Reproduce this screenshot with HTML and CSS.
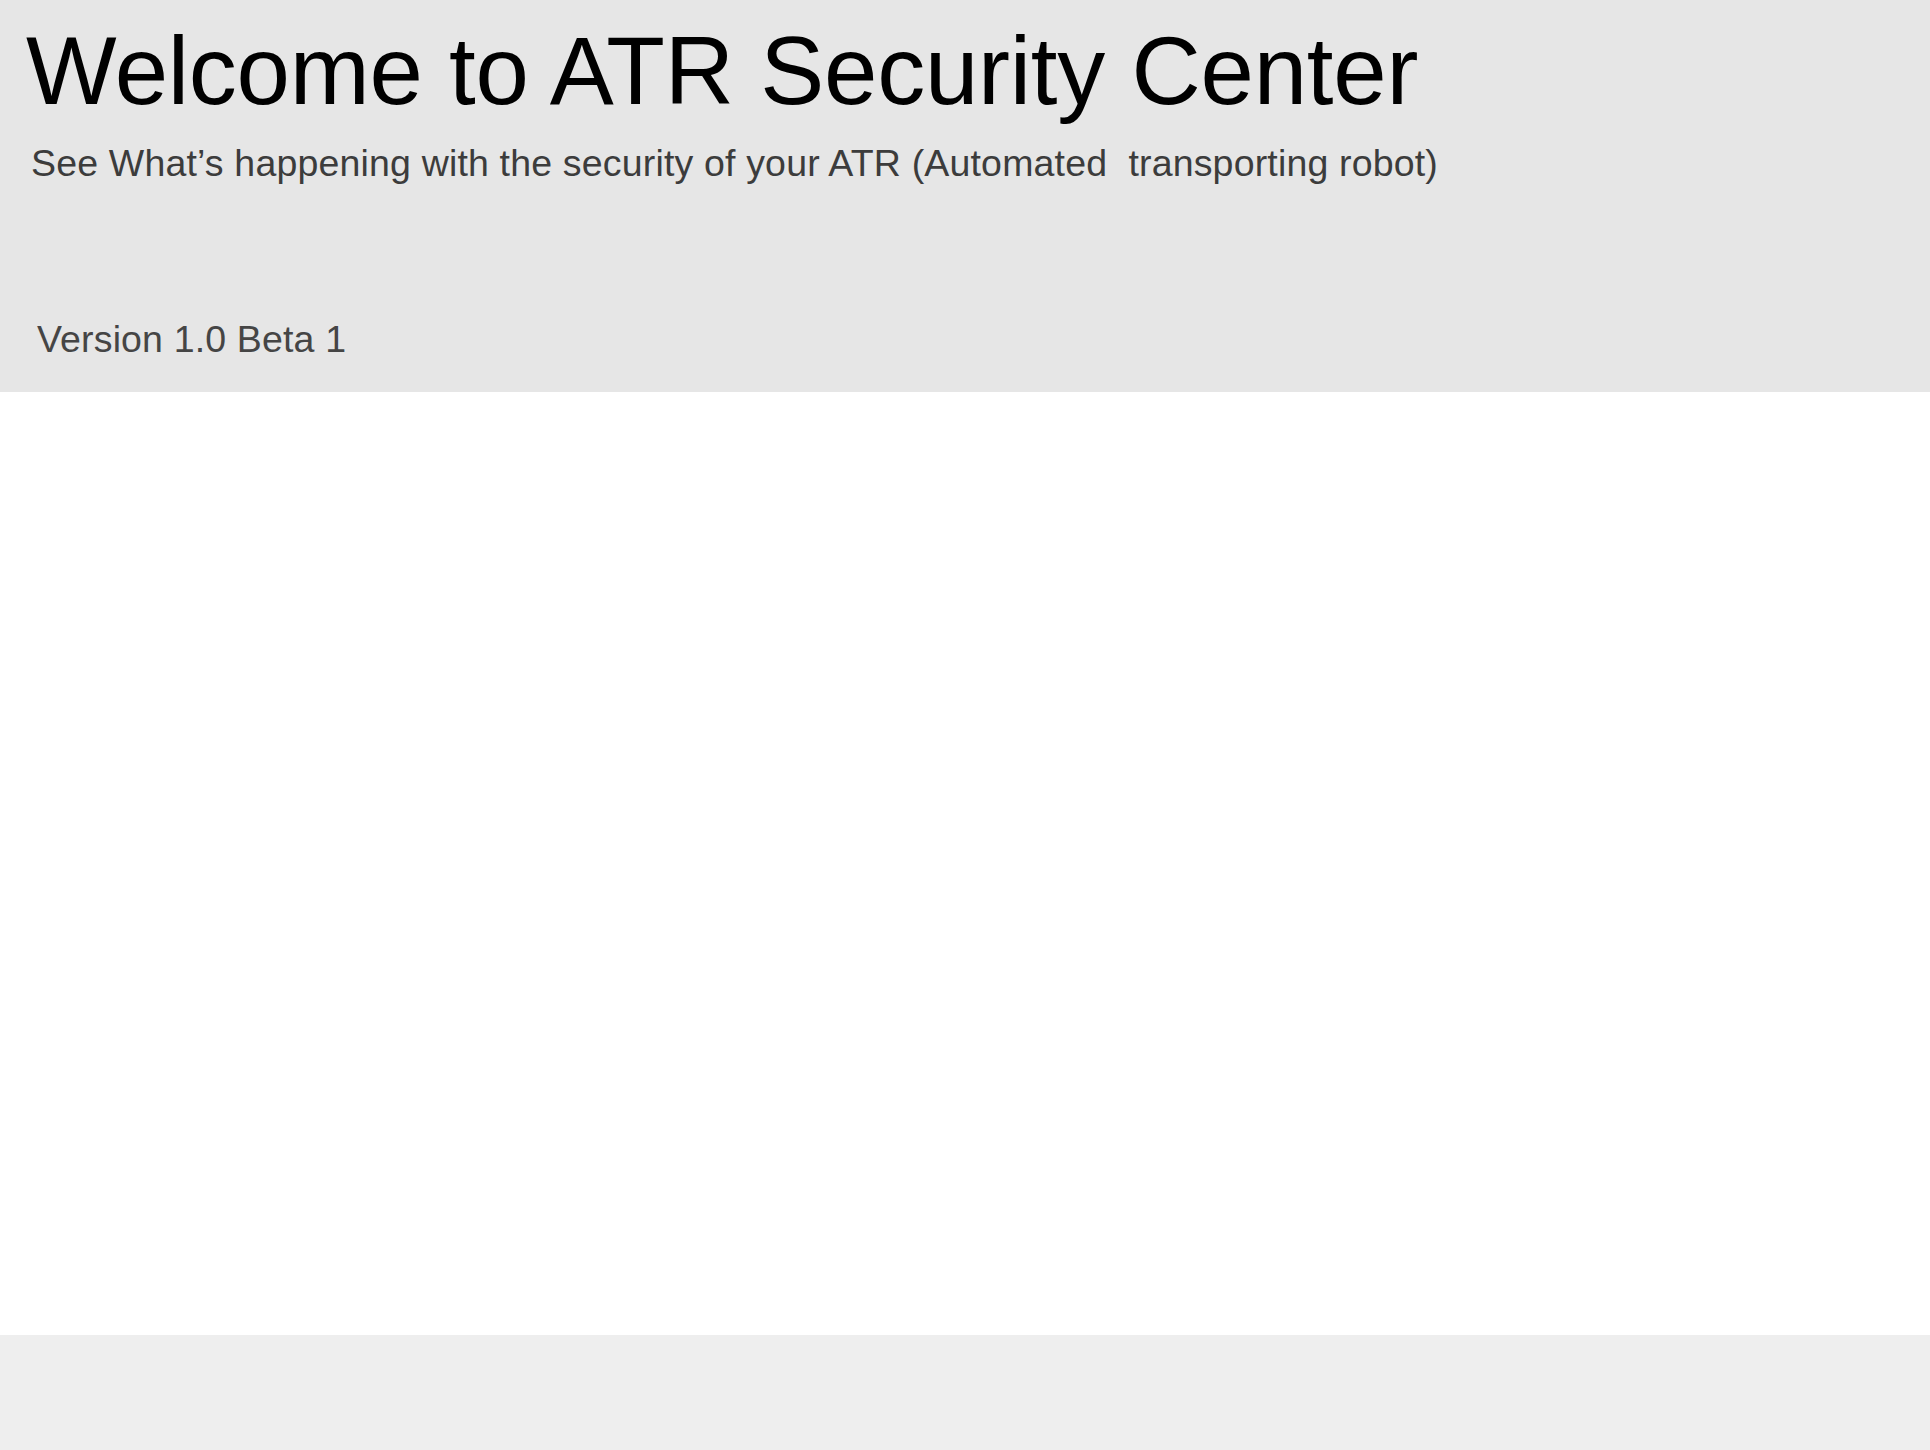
FILE: index.html
```html
<!DOCTYPE html>
<html lang="en">
<head>
<meta charset="utf-8">
<title>ATR Security Center</title>
<link rel="stylesheet" href="styles.css">
</head>
<body>
<div class="page">
  <header class="hero">
    <h1 class="hero-title">Welcome to ATR Security Center</h1>
    <p class="hero-subtitle">See What’s happening with the security of your ATR (Automated&nbsp; transporting robot)</p>
    <p class="hero-version">Version 1.0 Beta 1</p>
  </header>
  <main class="content"></main>
  <footer class="footer"></footer>
</div>
</body>
</html>
```

FILE: styles.css
```css
html, body {
  margin: 0;
  padding: 0;
  background: #ffffff;
}

body {
  font-family: "Liberation Sans", Arial, Helvetica, sans-serif;
}

.page {
  display: flex;
  flex-direction: column;
  min-height: 1450px;
}

.hero {
  height: 392px;
  box-sizing: border-box;
  background: #e6e6e6;
  padding: 16px 0 0 26px;
  display: flex;
  flex-direction: column;
}

.hero-title {
  margin: 0;
  font-size: 96px;
  line-height: 110px;
  letter-spacing: -0.25px;
  font-weight: 400;
  color: #000000;
  white-space: nowrap;
}

.hero-subtitle {
  margin: 15px 0 0 5px;
  font-size: 37.5px;
  line-height: 44px;
  letter-spacing: 0.17px;
  color: #3c3c3c;
  white-space: nowrap;
}

.hero-version {
  margin: 132px 0 0 11px;
  font-size: 37.5px;
  line-height: 44px;
  letter-spacing: 0.15px;
  color: #454545;
}

.content {
  flex: 1;
  background: #ffffff;
}

.footer {
  height: 115px;
  background: #eeeeee;
}
```
